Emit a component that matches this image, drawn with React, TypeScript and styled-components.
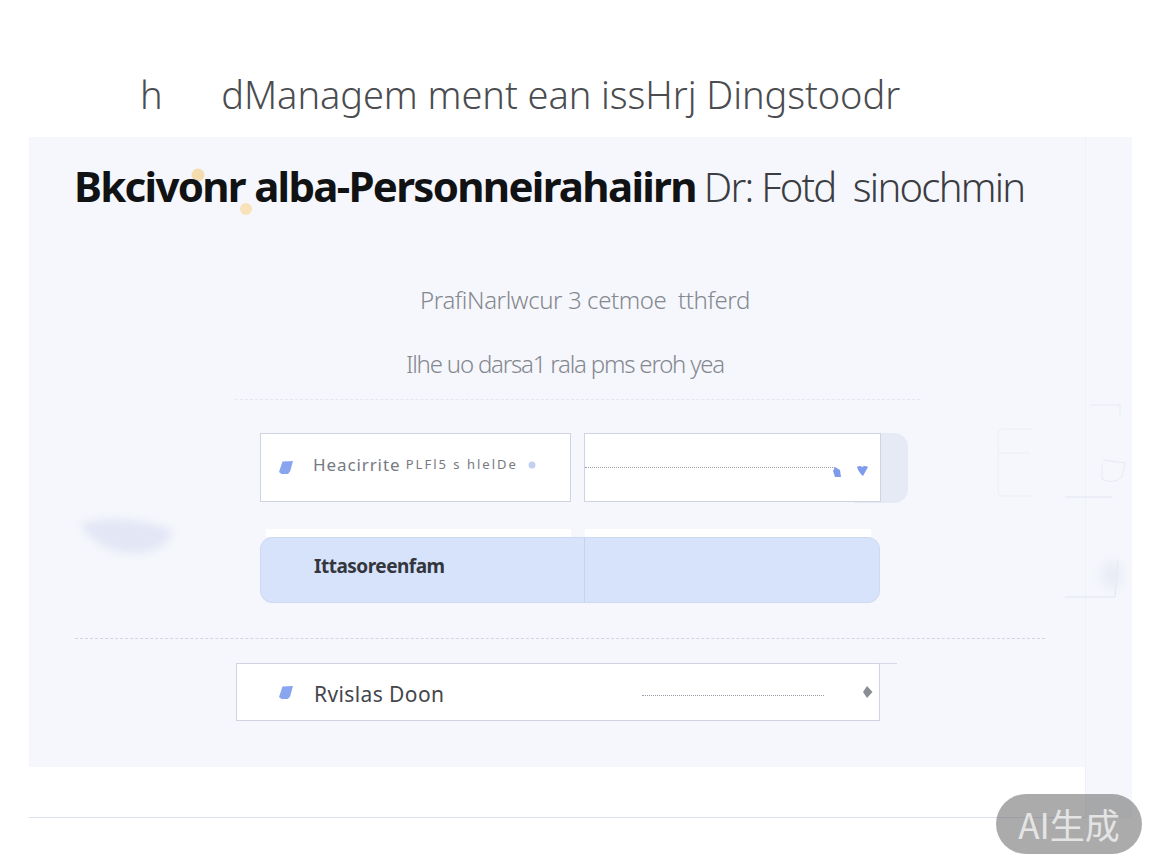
import { FC } from "react";
import styled, { createGlobalStyle } from "styled-components";

const GlobalStyle = createGlobalStyle`
  html, body {
    margin: 0;
    padding: 0;
    background: #fff;
    font-family: "Noto Sans", "Liberation Sans", sans-serif;
  }
`;

const Page = styled.div`
  position: relative;
  width: 1152px;
  height: 864px;
  overflow: hidden;
  background: #fff;
`;

const PageTitle = styled.h1`
  margin: 0;
  height: 137px;
  box-sizing: border-box;
  padding: 69px 0 0 140px;
  font-size: 38px;
  line-height: 50px;
  font-weight: 300;
  color: #4a4c50;
  white-space: pre;
  letter-spacing: -0.08px;
`;

const Stage = styled.div`
  position: relative;
  display: flex;
  margin-left: 29px;
  width: 1103px;
`;

const MainColumn = styled.div`
  width: 1056px;
`;

const Panel = styled.main`
  height: 630px;
  box-sizing: border-box;
  padding-top: 23px;
  background: #f5f7fc;
`;

const BottomLine = styled.div`
  height: 50px;
  border-bottom: 1px solid #dcdff0;
`;

const SideStrip = styled.aside`
  width: 47px;
  height: 681px;
  background: #f5f7fc;
  border-left: 1px solid #eff1f8;
  box-sizing: border-box;
`;

const Heading = styled.h2`
  position: relative;
  z-index: 1;
  margin: 0 0 0 45px;
  height: 52px;
  font-size: 42px;
  line-height: 52px;
  font-weight: 700;
  color: #111214;
  white-space: pre;
  letter-spacing: -1.7px;
`;

const HeadingLight = styled.span`
  margin-left: 8px;
  font-size: 40px;
  font-weight: 300;
  color: #3b3d42;
  letter-spacing: -1.75px;
`;

const Subtitle = styled.p<{ $top: number; $spacing: number; $width: number }>`
  margin: ${(p) => p.$top}px 0 0;
  width: ${(p) => p.$width}px;
  text-align: center;
  font-size: 24px;
  line-height: 30px;
  font-weight: 300;
  color: #85888f;
  letter-spacing: ${(p) => p.$spacing}px;
  white-space: pre;
`;

const Dashed = styled.div<{ $left: number; $width: number; $top: number; $color: string }>`
  margin: ${(p) => p.$top}px 0 0 ${(p) => p.$left}px;
  width: ${(p) => p.$width}px;
  border-top: 1px dashed ${(p) => p.$color};
`;

const RowOne = styled.div`
  position: relative;
  display: grid;
  grid-template-columns: 311px 297px;
  column-gap: 13px;
  margin: 33px 0 0 231px;
  height: 69px;
  width: 648px;
`;

const GreyTab = styled.div`
  position: absolute;
  top: 0;
  left: 594px;
  width: 54px;
  height: 70px;
  background: #e6eaf4;
  border-radius: 0 14px 14px 0;
`;

const Card = styled.div`
  position: relative;
  display: flex;
  align-items: center;
  box-sizing: border-box;
  background: #fff;
  border: 1px solid #cfd3e2;
`;

const SmallLabel = styled.span`
  margin: 0 0 7px 19px;
  font-size: 17px;
  color: #777a80;
  letter-spacing: 0.9px;
  white-space: pre;
`;

const TinyLabel = styled.span`
  margin-bottom: 7px;
  font-size: 13px;
  color: #777a80;
  letter-spacing: 2px;
  white-space: pre;
`;

const Rule = styled.div<{ $width: number; $left?: number; $top?: number }>`
  width: ${(p) => p.$width}px;
  margin-left: ${(p) => p.$left ?? 0}px;
  margin-top: ${(p) => p.$top ?? 0}px;
  border-top: 1px dotted #9a9da8;
`;

const Sliver = styled.div`
  display: grid;
  grid-template-columns: 305px 286px;
  column-gap: 14px;
  margin: 27px 0 0 237px;
  height: 8px;
  & > div {
    background: #fff;
  }
`;

const BlueRow = styled.div`
  display: grid;
  grid-template-columns: 324px 295px;
  margin-left: 231px;
  width: 620px;
  height: 66px;
  background: #d6e3fb;
  border: 1px solid #ccd9f3;
  border-radius: 12px;
  box-sizing: border-box;
`;

const BlueCell = styled.div`
  display: flex;
  align-items: center;
  padding: 0 0 8px 53px;
  border-right: 1px solid #c5d3ee;
  font-size: 19px;
  font-weight: 700;
  color: #33363c;
  letter-spacing: -0.5px;
`;

const ReviewRow = styled(Card)`
  margin: 24px 0 0 207px;
  width: 644px;
  height: 58px;
  padding-left: 41px;
`;

const ReviewLabel = styled.span`
  margin: 3px 0 0 20px;
  font-size: 21px;
  color: #44464c;
  letter-spacing: 0.4px;
`;

const TopRuleTail = styled.div`
  position: absolute;
  top: -1px;
  right: -18px;
  width: 18px;
  border-top: 1px solid #d5d8e5;
`;

const Overlay = styled.svg`
  position: absolute;
  top: 0;
  left: 0;
  pointer-events: none;
`;

const Badge = styled.div`
  position: absolute;
  left: 996px;
  top: 794px;
  width: 146px;
  height: 60px;
  border-radius: 30px;
  background: rgba(110, 110, 110, 0.58);
  color: #e4e4e4;
  font-family: "Noto Sans CJK SC", "Noto Sans", sans-serif;
  font-size: 35px;
  line-height: 60px;
  text-align: center;
`;

// little slanted blue marker in front of the rows
const Marker: FC<{ left?: number }> = ({ left = 0 }) => (
  <svg width="16" height="15" viewBox="0 0 16 15" style={{ marginLeft: left, flexShrink: 0 }}>
    <path d="M4.5 1.5 15 1l-2.8 10.2L10 14H3.5L1 12z" fill="#8aa5f0" />
  </svg>
);

const Diamond: FC<{ left: number }> = ({ left }) => (
  <svg width="14" height="14" viewBox="0 0 14 14" style={{ marginLeft: left, flexShrink: 0 }}>
    <path d="M7 1l5.5 6L7 13 3 7z" fill="#8a8d94" />
  </svg>
);

const Decorations: FC = () => (
  <Overlay width="1152" height="864" viewBox="0 0 1152 864">
    <defs>
      <filter id="soft" x="-50%" y="-50%" width="200%" height="200%">
        <feGaussianBlur stdDeviation="4" />
      </filter>
      <filter id="softer" x="-50%" y="-50%" width="200%" height="200%">
        <feGaussianBlur stdDeviation="6" />
      </filter>
    </defs>
    <path d="M80 524Q125 512 172 530 168 554 128 553 96 550 80 524z" fill="#e3e6f5" filter="url(#soft)" />
    <circle cx="198" cy="175" r="6.5" fill="#f5dcae" />
    <circle cx="246" cy="209" r="6" fill="#f7e2ba" />
    <path d="M1032 429h-28q-6 0-6 6v55q0 6 6 6h28M998 453h32" fill="none" stroke="#eceef4" />
    <path d="M1090 405h30v10M1102 463v16q10 6 20-2l3-14-22-3" fill="none" stroke="#e8eaf2" />
    <path d="M1065 497h47M1065 597h50l3-36" fill="none" stroke="#e2e5ef" />
    <ellipse cx="1112" cy="575" rx="10" ry="14" fill="#e8ebf6" filter="url(#softer)" />
    <path d="M835 467l5 3 1 7h-6l-2-6zM857 467q3-2 5 0 3-2 6 0l-5 9q-4-3-6-9z" fill="#7f9cec" />
    <circle cx="532" cy="465" r="3.5" fill="#c3d0f2" />
  </Overlay>
);

const App: FC = () => (
  <Page>
    <GlobalStyle />
    <PageTitle>{"h      dManagem ment ean issHrj Dingstoodr"}</PageTitle>
    <Stage>
      <MainColumn>
        <Panel>
          <Heading>
            Bkcivonr alba-Personneirahaiirn
            <HeadingLight>{"Dr: Fotd  sinochmin"}</HeadingLight>
          </Heading>
          <Subtitle $top={73} $spacing={-0.4} $width={1112}>
            {"PrafiNarlwcur 3 cetmoe  tthferd"}
          </Subtitle>
          <Subtitle $top={34} $spacing={-1.2} $width={1072}>
            {"Ilhe uo darsa1 rala pms eroh yea"}
          </Subtitle>
          <Dashed $left={206} $width={685} $top={20} $color="#e4e7f0" />
          <RowOne>
            <GreyTab />
            <Card>
              <Marker left={17} />
              <SmallLabel>Heacirrite </SmallLabel>
              <TinyLabel>PLFl5 s hlelDe</TinyLabel>
            </Card>
            <Card>
              <Rule $width={250} />
            </Card>
          </RowOne>
          <Sliver>
            <div />
            <div />
          </Sliver>
          <BlueRow>
            <BlueCell>Ittasoreenfam</BlueCell>
            <div />
          </BlueRow>
          <Dashed $left={46} $width={970} $top={35} $color="#d3d6df" />
          <ReviewRow>
            <TopRuleTail />
            <Marker />
            <ReviewLabel>Rvislas Doon</ReviewLabel>
            <Rule $width={182} $left={198} $top={6} />
            <Diamond left={36} />
          </ReviewRow>
        </Panel>
        <BottomLine />
      </MainColumn>
      <SideStrip />
    </Stage>
    <Decorations />
    <Badge>AI生成</Badge>
  </Page>
);

export default App;
